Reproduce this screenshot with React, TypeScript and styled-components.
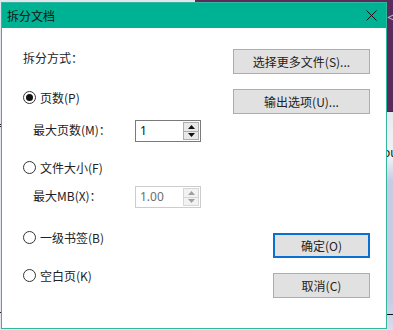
import React from "react";
import styled, { createGlobalStyle } from "styled-components";

const Global = createGlobalStyle`
  html, body { margin: 0; padding: 0; }
  body {
    width: 393px; height: 330px; overflow: hidden;
    font-family: "Noto Sans CJK SC", "Noto Sans", sans-serif;
  }
  * { box-sizing: border-box; }
`;

const Desktop = styled.div`
  position: relative;
  width: 393px;
  height: 330px;
  overflow: hidden;
  background: #e4e6ee;
`;

const BackWindow = styled.div<{ $x: number; $y: number; $w: number; $h: number; $bg: string }>`
  position: absolute;
  left: ${(p) => p.$x}px;
  top: ${(p) => p.$y}px;
  width: ${(p) => p.$w}px;
  height: ${(p) => p.$h}px;
  background: ${(p) => p.$bg};
  overflow: hidden;
`;

const Glyph = styled.span<{ $x: number; $y: number; $color: string; $size: number }>`
  position: absolute;
  left: ${(p) => p.$x}px;
  top: ${(p) => p.$y}px;
  color: ${(p) => p.$color};
  font-size: ${(p) => p.$size}px;
  line-height: 1;
  font-family: "Noto Sans", sans-serif;
  white-space: nowrap;
`;

const Rule = styled.div<{ $y: number; $x: number; $w: number; $color: string }>`
  position: absolute;
  left: ${(p) => p.$x}px;
  top: ${(p) => p.$y}px;
  width: ${(p) => p.$w}px;
  height: 1px;
  background: ${(p) => p.$color};
`;

const Dialog = styled.div`
  position: absolute;
  left: 1px;
  top: 2px;
  width: 386px;
  height: 327px;
  border: 1px solid #2fb89d;
  background: #ffffff;
  display: flex;
  flex-direction: column;
`;

const TitleBar = styled.div`
  height: 25px;
  flex: none;
  background: #00b294;
  display: flex;
  align-items: center;
  justify-content: space-between;
  padding-left: 5px;
`;

const Title = styled.span`
  font-size: 12px;
  color: #111;
  line-height: 1;
`;

const CloseButton = styled.div`
  width: 30px;
  height: 25px;
  display: flex;
  align-items: center;
  justify-content: center;
`;

const Body = styled.div`
  flex: 1;
  display: flex;
  justify-content: space-between;
  padding: 20px 16px 0 21px;
`;

const LeftColumn = styled.div`
  display: flex;
  flex-direction: column;
`;

const RightColumn = styled.div`
  display: flex;
  flex-direction: column;
  align-items: flex-end;
  padding-top: 1px;
`;

const SectionLabel = styled.div`
  height: 20px;
  line-height: 20px;
  font-size: 12px;
  color: #222;
`;

const RadioRow = styled.label<{ $top: number }>`
  margin-top: ${(p) => p.$top}px;
  height: 20px;
  display: flex;
  align-items: center;
  gap: 4px;
  font-size: 12px;
  color: #222;
`;

const RadioCircle = styled.span<{ $checked: boolean }>`
  width: 13px;
  height: 13px;
  border-radius: 50%;
  border: 1px solid #333;
  display: flex;
  align-items: center;
  justify-content: center;
  &::after {
    content: "";
    width: 7px;
    height: 7px;
    border-radius: 50%;
    background: #111;
    display: ${(p) => (p.$checked ? "block" : "none")};
  }
`;

const FieldRow = styled.div<{ $top: number }>`
  margin-top: ${(p) => p.$top}px;
  height: 22px;
  display: grid;
  grid-template-columns: 102px 66px;
  align-items: center;
  padding-left: 10px;
`;

const FieldLabel = styled.span`
  font-size: 12px;
  color: #222;
  margin-top: -3px;
`;

const SpinBox = styled.div<{ $disabled: boolean }>`
  width: 66px;
  height: 22px;
  border: 1px solid ${(p) => (p.$disabled ? "#cccccc" : "#7a7a7a")};
  display: flex;
  align-items: stretch;
  padding: 1px 1px 1px 0;
  background: #fff;
`;

const SpinValue = styled.span<{ $disabled: boolean }>`
  flex: 1;
  font-size: 12px;
  line-height: 18px;
  padding-left: 4px;
  color: ${(p) => (p.$disabled ? "#6d6d6d" : "#111")};
  font-family: "Noto Sans", sans-serif;
`;

const SpinButtons = styled.div`
  width: 16px;
  display: flex;
  flex-direction: column;
`;

const SpinArrow = styled.div<{ $disabled: boolean }>`
  flex: 1;
  background: ${(p) => (p.$disabled ? "#f2f2f2" : "#e8e8e8")};
  border: 1px solid ${(p) => (p.$disabled ? "#d6d6d6" : "#adadad")};
  display: flex;
  align-items: center;
  justify-content: center;
  & + & { margin-top: -1px; }
`;

const Button = styled.div<{ $width: number; $top: number; $default?: boolean }>`
  width: ${(p) => p.$width}px;
  height: 25px;
  margin-top: ${(p) => p.$top}px;
  background: #e1e1e1;
  border: ${(p) => (p.$default ? "2px solid #0a6fd0" : "1px solid #adadad")};
  display: flex;
  align-items: center;
  justify-content: center;
  font-size: 12px;
  color: #222;
`;

function Arrow({ up, disabled }: { up: boolean; disabled: boolean }) {
  return (
    <svg width="7" height="4" viewBox="0 0 7 4">
      <path d={up ? "M0 4 L3.5 0 L7 4 Z" : "M0 0 L3.5 4 L7 0 Z"} fill={disabled ? "#a0a0a0" : "#111"} />
    </svg>
  );
}

function Spin({ value, disabled }: { value: string; disabled: boolean }) {
  return (
    <SpinBox $disabled={disabled}>
      <SpinValue $disabled={disabled}>{value}</SpinValue>
      <SpinButtons>
        <SpinArrow $disabled={disabled}>
          <Arrow up disabled={disabled} />
        </SpinArrow>
        <SpinArrow $disabled={disabled}>
          <Arrow up={false} disabled={disabled} />
        </SpinArrow>
      </SpinButtons>
    </SpinBox>
  );
}

function Radio({ top, checked, children }: { top: number; checked?: boolean; children: React.ReactNode }) {
  return (
    <RadioRow $top={top}>
      <RadioCircle $checked={!!checked} />
      <span>{children}</span>
    </RadioRow>
  );
}

export default function App() {
  return (
    <>
      <Global />
      <Desktop>
        <BackWindow $x={0} $y={0} $w={195} $h={330} $bg="#e2e5ee">
          <Rule $x={0} $y={124} $w={2} $color="#222" />
          <Rule $x={0} $y={126} $w={2} $color="#222" />
          <Rule $x={0} $y={312} $w={3} $color="#222" />
        </BackWindow>
        <BackWindow $x={195} $y={0} $w={198} $h={111} $bg="#5b2b5c">
          <Glyph $x={192} $y={11} $color="#c9bfcb" $size={13}>
            &lt;
          </Glyph>
        </BackWindow>
        <BackWindow
          $x={386}
          $y={111}
          $w={7}
          $h={219}
          $bg="linear-gradient(#3a2b3e 0, #3a2b3e 1px, #e9e9f0 1px, #f3f3f6 45px, #c9cbe6 70px, #c9cbe6 190px, #dcdcee 219px)"
        >
          <Glyph $x={-3} $y={36} $color="#111" $size={12}>
            ou
          </Glyph>
          <Rule $x={0} $y={203} $w={7} $color="#111" />
        </BackWindow>

        <Dialog>
          <TitleBar>
            <Title>拆分文档</Title>
            <CloseButton>
              <svg width="11" height="11" viewBox="0 0 11 11">
                <path d="M0.5 0.5 L10.5 10.5 M10.5 0.5 L0.5 10.5" stroke="#111" strokeWidth="1" />
              </svg>
            </CloseButton>
          </TitleBar>
          <Body>
            <LeftColumn>
              <SectionLabel>拆分方式：</SectionLabel>
              <Radio top={19} checked>
                页数(P)
              </Radio>
              <FieldRow $top={13}>
                <FieldLabel>最大页数(M)：</FieldLabel>
                <Spin value="1" disabled={false} />
              </FieldRow>
              <Radio top={15}>文件大小(F)</Radio>
              <FieldRow $top={9}>
                <FieldLabel>最大MB(X)：</FieldLabel>
                <Spin value="1.00" disabled />
              </FieldRow>
              <Radio top={19}>一级书签(B)</Radio>
              <Radio top={18}>空白页(K)</Radio>
            </LeftColumn>
            <RightColumn>
              <Button $width={137} $top={0}>
                选择更多文件(S)...
              </Button>
              <Button $width={137} $top={15}>
                输出选项(U)...
              </Button>
              <Button $width={97} $top={119} $default>
                确定(O)
              </Button>
              <Button $width={97} $top={15}>
                取消(C)
              </Button>
            </RightColumn>
          </Body>
        </Dialog>
      </Desktop>
    </>
  );
}
